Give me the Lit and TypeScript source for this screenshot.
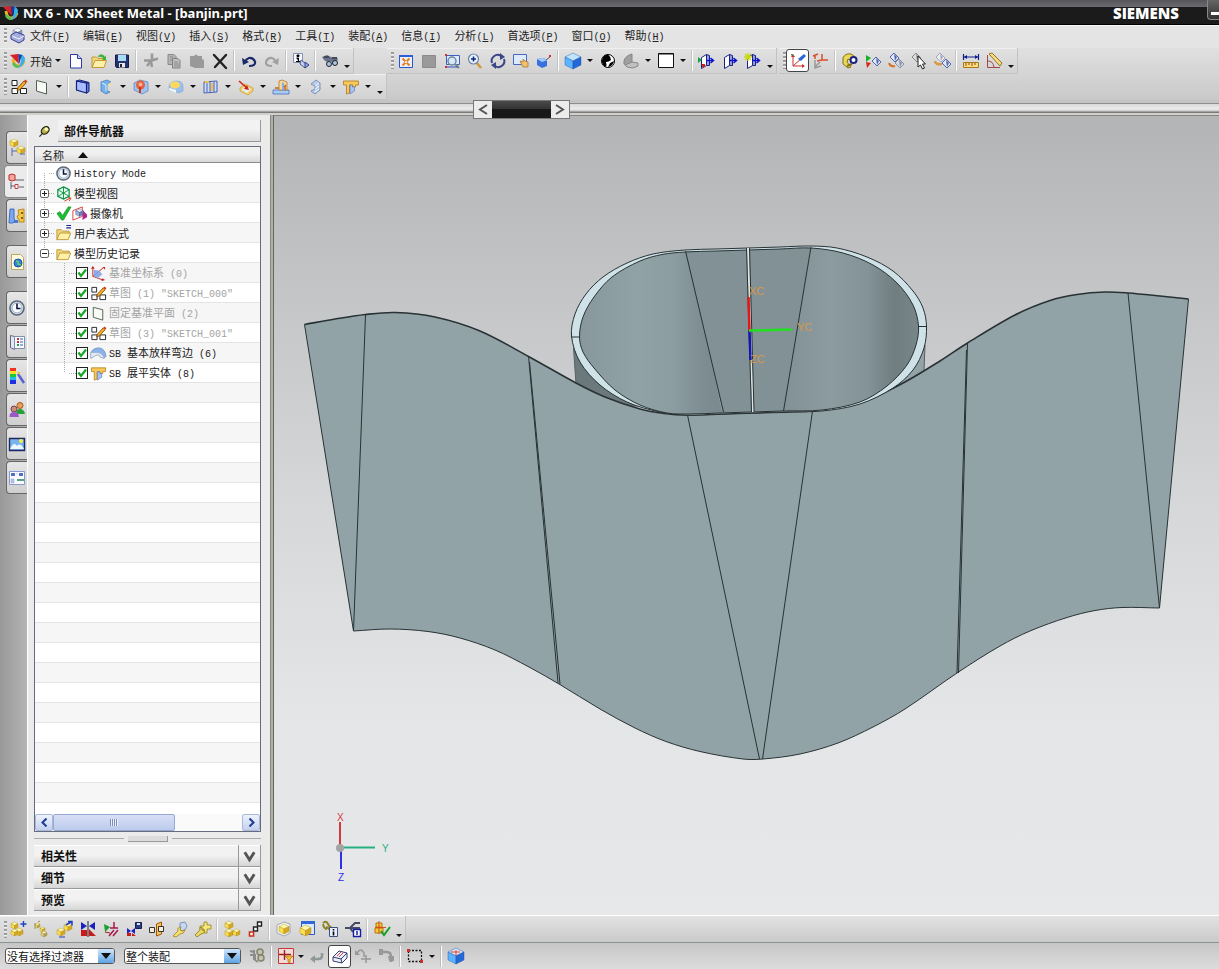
import { LitElement, html, css, svg, nothing } from "lit";
import type { TemplateResult } from "lit";
import { customElement, property } from "lit/decorators.js";
import { classMap } from "lit/directives/class-map.js";

type Pt = [number, number];

/* ---------- text: CJK runs and fixed-pitch Latin runs ---------- */
const mixed = (text: string, accessKey = false) =>
  text.split(/([\x20-\x7e]+)/).filter(Boolean).map((run) => {
    if (!/^[\x20-\x7e]/.test(run)) return run;
    const key = accessKey ? /^\((\w)\)$/.exec(run) : null;
    return key
      ? html`<span class="latin">(<u>${key[1]}</u>)</span>`
      : html`<span class="latin">${run}</span>`;
  });

/* ---------- icon parts ---------- */
const cube = (x: number, y: number, s: number, top = "#fff7a8", left = "#fbe04c", right = "#d8a820", line = "#a88a20") => {
  const h = s / 2, q = s / 4;
  return svg`<path d="M${x} ${y + q}l${h} ${-q}l${h} ${q}l${-h} ${q}z" fill=${top} stroke=${line} stroke-width=".4"/>
  <path d="M${x} ${y + q}l${h} ${q}v${h}l${-h} ${-q}z" fill=${left} stroke=${line} stroke-width=".4"/>
  <path d="M${x + s} ${y + q}l${-h} ${q}v${h}l${h} ${-q}z" fill=${right} stroke=${line} stroke-width=".4"/>`;
};
const blueCube = (x: number, y: number, s: number) => cube(x, y, s, "#bfe4ff", "#5ab4ff", "#2468d8", "#1c4fa0");
const grayCube = (x: number, y: number, s: number) => cube(x, y, s, "#f4f6fb", "#c3cbe0", "#8b95b6", "#66708f");
const sheet = (x: number, y: number, f = "#dfe7fb", s = "#5468a8") =>
  svg`<path d="M${x} ${y + 4}l4-4 5 5-4 4z" fill=${f} stroke=${s}/><path d="M${x + 4} ${y + 1}l3 3-2 4z" fill=${s}/>`;
const boxArrow = svg`<path d="M3.500 5.500l5-3v11l-5 3z" fill="#fff" stroke="#1c2480"/><path d="M8.500 2.500l3 1v10l-3 0z" fill="#8f9fe0" stroke="#1c2480"/><path d="M8 8.500h7M12.500 6l3 2.500-3 2.500" fill="none" stroke="#1010d0" stroke-width="1.500"/>`;
const nxBall = svg`<path d="M4 7q1 8 6 7 4-1 5-5" fill="none" stroke="#f0b020" stroke-width="3"/><path d="M12 2q6 3 3 9-2 4-6 5 4-6 3-14z" fill="#38b0e8"/><path d="M1 3l8-1 1 10z" fill="#d82028"/><path d="M9 2l4 1-3 9z" fill="#203c9c"/><path d="M3 12q2 4 6 4l1-3q-3 1-5-3z" fill="#58c050"/>`;
const sketchGlyph = svg`<path d="M2 2.500h5v5h-5zM2 10.500h5.500v5h-5.500zM10.500 10.500h6v5h-6z" fill="#fff" stroke="#222"/><path d="M8 9.500l6-6.500 2 2-6 6.500-3 1z" fill="#f4b020" stroke="#7c3800" stroke-width=".8"/><path d="M14 3l1.500-1.500 2 2L16 5z" fill="#d84020"/>`;
const plane = svg`<path d="M3.500 2.500l10 2.500v11l-10-3z" fill="#f8faf6" stroke="#506050"/>`;
const flat = svg`<path d="M1.500 3h15v4h-3v2h-3V7h-3v8l-3 1V7h-3z" fill="#f8c858" stroke="#b07818" stroke-width=".8"/><path d="M8 7h2.500v2h2v4L8 16z" fill="#a8c4f4" stroke="#5570b8" stroke-width=".6"/>`;
const clock = svg`<circle cx="9" cy="9" r="7" fill="#dcebf8" stroke="#5c6878" stroke-width="1.600"/><circle cx="9" cy="9" r="5" fill="#f6faff" stroke="#9ab"/><path d="M9 4.500V9.500h3.500" fill="none" stroke="#113" stroke-width="1.600"/>`;
const folder = svg`<path d="M2 15.500V5h4.500l1.500 1.500h7v2.500" fill="#f0d878" stroke="#c09838"/><path d="M2 15.500l3-7h11.500l-2.500 7z" fill="#fff2a8" stroke="#c09838"/>`;
const greenCheck = svg`<path d="M2 9l3-2 3 4 6-9 3 0-8 14H7z" fill="#18c030" stroke="#0c8020" stroke-width=".6"/>`;

const ICONS: Record<string, TemplateResult | unknown> = {
  nx: nxBall,
  part: svg`${grayCube(4, 1, 9)}<path d="M2 8l5-3 8 3v5l-5 3-8-4z" fill="#a4aede" stroke="#34408c"/><path d="M3 9l7 3 5-3" fill="none" stroke="#f2f4ff"/>`,
  newFile: svg`<path d="M3.500 2.500h7l4 4v9.500h-11z" fill="#fdfdff" stroke="#2c38a8"/><path d="M10.500 2.500v4h4" fill="#c8d0f8" stroke="#2c38a8"/>`,
  open: svg`${folder}<path d="M8 4q4-4 7 1l1-2v5h-4l1.500-1.500Q12 4 8 5z" fill="#40b038"/>`,
  save: svg`<path d="M2.500 3h13v12.500h-12l-1-1z" fill="#243470" stroke="#141c48"/><path d="M5 3h8v6H5z" fill="#a8dcf4"/><path d="M6 11h6v4.500H6z" fill="#e8e8e8"/><path d="M7 12h2v3H7z" fill="#222"/>`,
  cut: svg`<path d="M10 1.500v8M2 8.500h8l6-2M9 9l-4 5M9 10l1 5" stroke="#999" stroke-width="2.600" fill="none"/>`,
  copy: svg`<path d="M3 2.500h6l2 2v8H3z" fill="#b4b4b4" stroke="#888"/><path d="M7.500 6.500h5.500l2 2V16H7.500z" fill="#c0c0c0" stroke="#808080"/><path d="M9 10h4M9 12h5M9 14h5M5 5h3M5 8h2" stroke="#888"/>`,
  paste: svg`<path d="M2 4h4q2-3 4 0h4v3l2 1v8H7l-5-2z" fill="#999"/>`,
  del: svg`<path d="M3 3l12 13M15 3L4 15" stroke="#222" stroke-width="2.400" stroke-linecap="round"/>`,
  undo: svg`<path d="M9 14q7 0 6-4.500-2-4-6-3.500-3 1-4 4" fill="none" stroke="#1c2a6c" stroke-width="2.200"/><path d="M2 6l1 7 6-3z" fill="#1c2a6c"/>`,
  redo: svg`<path d="M9 14q-7 0-6-4.500 2-4 6-3.500 3 1 4 4" fill="none" stroke="#a0a0a0" stroke-width="2.200"/><path d="M16 6l-1 7-6-3z" fill="#a0a0a0"/>`,
  info: svg`<path d="M1.500 1.500h9v9h-9z" fill="#f6f8ff" stroke="#8090b0"/><path d="M5 3h2v1.500H5zM4.500 6h2v3.500M4 9.500h4.500" fill="#000" stroke="#000"/><path d="M9 8l5 4-1 4-5-4z" fill="#c4cdf0" stroke="#5060a0"/><path d="M13 10l4 3-4 3z" fill="#94a4dc" stroke="#34408c"/>`,
  find: svg`<path d="M1 5l5-2 4 2 6 0 1 3-4 3-4-2-3 1-3-2z" fill="#68728c"/><circle cx="8" cy="12" r="2.500" fill="#a8c4e8" stroke="#222"/><circle cx="14" cy="11" r="2.500" fill="#a8c4e8" stroke="#222"/><path d="M3 5h5M11 6h5" stroke="#222"/>`,
  fit: svg`<path d="M2.500 3.500h13v12h-13z" fill="#e8f0ff" stroke="#2858c8"/><path d="M2 3h14v2H2z" fill="#2c60d8"/><path d="M5.500 6.500l7 7M12.500 6.500l-7 7" stroke="#e88018" stroke-width="2"/><path d="M8 9h2v2H8z" fill="#e8f0ff"/>`,
  grayBox: svg`<path d="M2.500 3.500h13v12h-13z" fill="#9a9a9a" stroke="#8a8a8a"/>`,
  zoomBox: svg`<path d="M3.500 3.500h13v9h-13z" fill="#e2ecff" stroke="#4060c0"/><circle cx="9" cy="9" r="4" fill="#d4eaf8" stroke="#7088a0" stroke-width="1.500"/><path d="M12 12l4 4" stroke="#788" stroke-width="2"/><path d="M2 15h13" stroke="#3050c0"/><path d="M2 2h2v2H2zM2 14h2v2H2z" fill="#d03030"/>`,
  zoomIn: svg`<path d="M10 10l5 6" stroke="#d09838" stroke-width="2.500"/><circle cx="7.500" cy="7" r="5" fill="#e4f2ff" stroke="#7080a8" stroke-width="1.200"/><path d="M5 7h5M7.500 4.500v5" stroke="#102878" stroke-width="1.500"/>`,
  rotate: svg`<path d="M3 11a6 6 0 0 1 9-7M15 7a6 6 0 0 1-9 7" fill="none" stroke="#3a4688" stroke-width="2"/><path d="M11 1l5 4-5 3zM7 17l-5-4 5-3z" fill="#3a4688"/>`,
  pan: svg`<path d="M1.500 2.500h13v10h-13z" fill="#dceafc" stroke="#4868c0"/><path d="M8 9l3 1 0-3 2 2 3 1v5h-5z" fill="#f0c070" stroke="#a87828" stroke-width=".8"/>`,
  persp: svg`<path d="M2 7l7-1 3 3v5l-5 2-5-3z" fill="#3870e0"/><path d="M2 7l6-1 4 2-5 2z" fill="#a4ccff"/><path d="M11 8l5-4" stroke="#555"/><path d="M14 3h2v2h-2z" fill="#d03030"/>`,
  shaded: blueCube(1, 1, 16),
  ball: svg`<circle cx="9" cy="9" r="6.500" fill="#fff" stroke="#000"/><path d="M9 2.500a6.500 6.500 0 0 0-2 12.500q1-2 0-5 3 0 5-2 0-3-3-5.500z" fill="#000"/><path d="M15 9q-1 5-6 6l2-4z" fill="#000"/>`,
  grayPart: svg`<path d="M2 9q1-5 8-7v8l-5 3-3-1z" fill="#a0a0a0" stroke="#848484"/><path d="M3 13l7-3 6 1v3l-5 2-6-1z" fill="#c0c0c0" stroke="#888"/>`,
  white: svg`<path d="M1.500 1.500h15v14h-15z" fill="#fff" stroke="#111"/><path d="M1 2h16" stroke="#111"/>`,
  sectA: svg`${boxArrow}<path d="M0 5l4 3-4 3z" fill="#18a838"/><path d="M4 12h3v3H4z" fill="#d02020"/>`,
  sectB: boxArrow,
  sectC: svg`${boxArrow}<path d="M4 1v8M0 5h8M1 2l6 6M7 2L1 8" stroke="#c8d818" stroke-width="1.300"/>`,
  wcs: svg`<path d="M4 5v9h9M4 14l9-8" fill="none" stroke="#c83030"/><path d="M2 5l2-3 2 3zM13 12l3 2-3 2z" fill="#c83030"/><path d="M9 7l6-5 2 2-5 5z" fill="#2868d8"/><path d="M2 2h2v1.500H2z" fill="#28a040"/>`,
  wcsB: svg`<path d="M1 4l5-2M3 3v4M10 2v6h6M10 8l-5 1" fill="none" stroke="#d85030" stroke-width="1.500"/><path d="M3 8v8l6-2M3 15l5-5" fill="none" stroke="#999" stroke-width="1.500"/>`,
  mobile: svg`<path d="M2 6q2-5 8-4l3 2-4 4-2-1-1 3 4 5-3 1-5-4z" fill="#ecd858" stroke="#847010"/><circle cx="12.500" cy="8" r="3" fill="#fff" stroke="#182080" stroke-width="2"/><path d="M6 14l5-2" stroke="#847010" stroke-width="2"/>`,
  play: svg`<path d="M2 3l5 3-5 4z" fill="#18b028"/><path d="M2 10l5 1-4 5z" fill="#d82818"/>${sheet(8, 5)}`,
  sheets: svg`${sheet(3, 1)}${sheet(8, 7, "#d4d8e4", "#8890a8")}<path d="M2 11q1 4 6 3" fill="none" stroke="#d87028" stroke-width="2"/>`,
  pick: svg`${sheet(2, 1, "#ddd", "#888")}<path d="M8 4v11l2.500-2 2 4 2-1-2-4h3z" fill="#fff" stroke="#222"/>`,
  sheetsB: svg`${sheet(3, 1, "#eee", "#a0a8c0")}${sheet(9, 7)}<path d="M2 9q0 4 7 3" fill="none" stroke="#d89848" stroke-width="2.500"/>`,
  measure: svg`<path d="M1.500 2v6M16.500 2v6M2 5h14" stroke="#101c90" stroke-width="1.200"/><path d="M2 5l3-2v4zM16 5l-3-2v4z" fill="#101c90"/><path d="M1.500 10.500h15v5h-15z" fill="#f8e080" stroke="#a87818"/><path d="M4 11v3M7 11v2M10 11v3M13 11v2" stroke="#a04010"/>`,
  angle: svg`<path d="M2.500 3v12.500H15" fill="none" stroke="#a04848"/><path d="M3 9q5 0 6 6" fill="none" stroke="#a04848"/><path d="M4 2l3-1 10 10-2 3z" fill="#f6dc80" stroke="#987020"/>`,
  sketch: sketchGlyph,
  plane,
  tab: svg`<path d="M2.500 3l10 2v10l-10-3z" fill="#a8bcff" stroke="#14207c" stroke-width="1.200"/><path d="M2.500 3l3-1 9.500 2.500-2.500 .5zM15 4.500v9l-2.500 1.500V5z" fill="#6078d8" stroke="#14207c"/>`,
  flange: svg`<path d="M4 4l6-2 4 2-4 3v6l3 1-4 2-5-3z" fill="#6fb2ee" stroke="#4474b8" stroke-width=".7"/><path d="M10 7l4-3v2l-2 2z" fill="#f8e090"/><path d="M5 5l4 2v6" fill="none" stroke="#dff0ff"/>`,
  bend: svg`<path d="M2 5l6-3 8 2v9l-6 3-8-4z" fill="#9cc4f0" stroke="#5480b8" stroke-width=".7"/><circle cx="8.500" cy="7" r="4.500" fill="#e86040"/><circle cx="8.500" cy="6.500" r="2" fill="#f8b090"/><path d="M8 9v6" stroke="#c83818" stroke-width="2"/>`,
  dimple: svg`<path d="M2 9q0-5 7-6 7 0 7 5v5l-4 2-10-3z" fill="#98c0ec" stroke="#88a4c8" stroke-width=".6"/><ellipse cx="8" cy="7" rx="5" ry="3.500" fill="#fcd860"/><path d="M2 10l7 2v3l-7-3z" fill="#eef6fc"/>`,
  louver: svg`<path d="M2 4l13-1v11l-13 1z" fill="#cfdcfb" stroke="#4860b0"/><path d="M5 4v10M8 4v10M12 4v10" stroke="#4860b0"/><path d="M9 5h2v8H9zM3 3h4v2H3z" fill="#f4c040"/>`,
  cutout: svg`<path d="M3 10l5-4 8 4v3l-5 4-8-4z" fill="#f4d068" stroke="#c89830" stroke-width=".7"/><path d="M8 8l6 3-4 4-5-3z" fill="#dff0ff"/><path d="M2 3l8 7" stroke="#d02018" stroke-width="1.600"/><path d="M12 12l-5-1 3-4z" fill="#d02018"/>`,
  punch: svg`<path d="M1 12h16v4H1z" fill="#a8ccf8" stroke="#4c70b8" stroke-width=".8"/><path d="M7 12V3l3-1 5 2v8z" fill="#f8d898" stroke="#b87828" stroke-width=".8"/><path d="M10 12V4l2 1v7" fill="#88b0e8"/><path d="M3 10h4M13 8v4M12 9l2-2" stroke="#c06828" stroke-width="1.500"/>`,
  corner: svg`<path d="M4 6l5-4 4 3v7l-5 4-4-3 4-2V8z" fill="#b8cdec" stroke="#6880ac" stroke-width=".8"/><path d="M8 8l4-3M8 11l4-3M8 14l4-3" stroke="#f4f8ff"/>`,
  flat,
  addComp: svg`${cube(1, 2, 7)}${cube(5, 8, 8)}${cube(1, 9, 7)}<path d="M13.500 1v6M10.500 4h6" stroke="#2040c0" stroke-width="1.400"/>`,
  newComp: svg`${cube(2, 3, 5, "#fff8c0", "#e8dc80", "#b8a850")}${cube(7, 7, 5)}${cube(8, 11, 6, "#f4f0c8", "#d8d090", "#a8a068")}<path d="M5 2l2-1M2 3v6" fill="none" stroke="#a09048"/>`,
  moveComp: svg`${cube(1, 8, 8)}${cube(8, 3, 8)}<path d="M10 5l5-3M12 1.500h4v4" fill="none" stroke="#2040c0" stroke-width="1.500"/><path d="M3 17h6" stroke="#2040c0"/>`,
  mirror: svg`<path d="M2 2l6 4-6 4zM16 2v8l-6-4z" fill="#1c20c0"/><path d="M2 10h6v6H2zM10 9l7 7h-7z" fill="#c81c1c"/><path d="M9 1v16" stroke="#222"/>`,
  constrain: svg`<path d="M2 4l6 3-5 5z" fill="#18a030"/><path d="M12 2v6M8 8h8M7 16l5-6M11 16l5-6" stroke="#a81848" stroke-width="1.500"/><path d="M3 12l5 1" stroke="#a02020"/>`,
  pattern: svg`<path d="M2 8l4 3-4 3zM10 8v6l-4-3z" fill="#1c20c0"/><path d="M2 13h4v3H2zM7 13l4 3H7z" fill="#c81c1c"/><path d="M10.500 2.500h6v6h-6z" fill="#2c3c80" stroke="#181c50"/><path d="M12 3h3v2h-3z" fill="#cfe4ff"/>`,
  ortho: svg`<path d="M1.500 7.500h5v5h-5z" fill="#f4f0d8" stroke="#333"/><path d="M8.500 4l5-2v12l-5 2z" fill="#f8c060" stroke="#9c5808"/><path d="M10.500 6.500h5v5h-5z" fill="#f4f0d8" stroke="#333"/>`,
  wrench: svg`<path d="M9 3l5-1 2 4-2 4-5 1z" fill="#c4d8f4" stroke="#8098b8"/><path d="M2 16l5-5q-1-4 3-4l-1 3 2 1 3-1q-1 4-5 4l-4 3z" fill="#f8e070" stroke="#988018" stroke-width=".8"/>`,
  wrenchB: svg`<path d="M10 2l3 0 0 3h4v4h-4v4h-3V9H6V6h4z" fill="#f8e878" stroke="#8c8020" stroke-width=".8"/><path d="M1 15l5-5q-1-3 2-3v3l3 1q-1 3-4 3l-4 3z" fill="#ecd860" stroke="#8c7818" stroke-width=".8"/>`,
  cubes3: svg`${cube(2, 1, 8)}${cube(2, 9, 8)}${cube(10, 9, 7)}`,
  chain: svg`<path d="M11.500 2h4v4h-4z" fill="#fff" stroke="#222" stroke-width="1.400"/><path d="M7.500 7h4v4h-4z" fill="#fff" stroke="#222" stroke-width="1.400"/><path d="M3.500 12h4v4h-4z" fill="#fff" stroke="#c83018" stroke-width="1.600"/>`,
  asmA: svg`<path d="M2 5l7-3 6 2v9l-6 3-7-3z" fill="#f6f6ee" stroke="#a0a8b4"/>${cube(4, 4, 10)}`,
  asmB: svg`<path d="M3.500 1.500h13v13h-13z" fill="#dceaff" stroke="#2858c0"/><path d="M3 1h14v3H3z" fill="#3068dc"/>${cube(2, 5, 11)}`,
  asmC: svg`<path d="M2 3q3-3 5 1t3 2M2 4q1 5 4 5M5 7q4 1 5 6" fill="none" stroke="#8c8428" stroke-width="2"/><path d="M8.500 7.500h8v9h-8z" fill="#e8f0ff" stroke="#405080"/><path d="M12.500 9v1.500M12.500 11.500v4" stroke="#000" stroke-width="1.600"/>`,
  asmD: svg`<path d="M1 8h5M6 8l5-5h5M6 8h10M6 8l3 4" fill="none" stroke="#444c64" stroke-width="2"/><path d="M9.500 9.500h7v7h-7z" fill="#fff" stroke="#181ca0" stroke-width="1.400"/><path d="M13 11v4" stroke="#181ca0" stroke-width="1.500"/>`,
  verify: svg`<path d="M3 3h6v4H3zM2 8h8v5H2z" fill="#f8c838" stroke="#b07810"/><path d="M6 1v13M2 7.500h11" stroke="#d85018"/><path d="M8 11l3 4 6-8" fill="none" stroke="#18a028" stroke-width="2"/>`,
  grayAsm: svg`<path d="M2 8h5v5l3 2M6 3v10M2 4l4 1" fill="none" stroke="#8c8c8c" stroke-width="2"/><circle cx="12" cy="5" r="3" fill="#c4c4b4" stroke="#84846c" stroke-width="1.500"/><circle cx="13" cy="11" r="3" fill="#c4c4b4" stroke="#84846c" stroke-width="1.500"/>`,
  snap: svg`<path d="M1.500 1.500h15v15h-15z" fill="#f0dcd8" stroke="#c83838"/><path d="M2 7.500h12M7.500 3v10" stroke="#a02020" stroke-width="1.400"/><path d="M8 9h8l-3 3v4l-2-1v-3z" fill="#f4c028" stroke="#a87010" stroke-width=".7"/>`,
  back: svg`<path d="M14 6v3q0 3-4 3H6" fill="none" stroke="#909898" stroke-width="2.500"/><path d="M2 12l5-4v8z" fill="#909898"/>`,
  eraser: svg`<path d="M2 10l6-6 8 2v5l-5 5-9-2z" fill="#eef0fa" stroke="#343c70"/><path d="M2 10l8 2 6-6M10 12l1 4" fill="none" stroke="#343c70"/><path d="M6 9l4-4M8 10l4-4" stroke="#d84848"/>`,
  hookA: svg`<path d="M3 6q4-6 7 0v4M7 12h10M12 8v8" fill="none" stroke="#989898" stroke-width="1.500"/><path d="M1 3v5h5z" fill="#989898"/>`,
  hookB: svg`<path d="M3 5h7q4 0 4 5v5" fill="none" stroke="#989898" stroke-width="2.600"/><path d="M2 2h4v6H2zM11 9h6v5h-5z" fill="#989898"/>`,
  marquee: svg`<path d="M2.500 3.500h13v11h-13z" fill="none" stroke="#111" stroke-dasharray="2 1.500" stroke-width="1.300"/><path d="M1 2h3v3H1zM14 13h3v3h-3z" fill="#c83030"/>`,
  cubeRed: svg`${blueCube(1, 1, 16)}<path d="M4 5l5-3 5 3-5 3z" fill="#f8e8e8"/><path d="M9 3v6M4 5h9" stroke="#d04040"/>`,
  clock,
  views: svg`<path d="M9 2l6 3v7l-6 3-6-3V5z" fill="#e8fff0" stroke="#109048" stroke-width="1.300"/><path d="M9 2v13M3 5l12 7M15 5L3 12" stroke="#109048"/><path d="M10 17l6-3M14 13l3 1-2 3" fill="none" stroke="#d83020"/>`,
  camera: svg`<path d="M2 6l10-4v10l-10 4z" fill="#fff" stroke="#e04040"/>${cube(5, 4, 8, "#dce8ff", "#a0b4e0", "#6880bc", "#445")}<path d="M13 6l4 4v3l-5 3z" fill="#b02890"/>`,
  check: greenCheck,
  folder,
  folderEq: svg`${folder}<path d="M12 .5h5M12 3h5" stroke="#1c2090" stroke-width="1.200"/>`,
  csys: svg`<path d="M3 2v10l11 4M3 12l11-9" fill="none" stroke="#c82828"/><path d="M4 5l6 1 3 4-5 4-4-2z" fill="#86a4e4" opacity=".9"/><path d="M1 4l2-3 2 3zM13 2h3v3zM13 14l3 2-4 1z" fill="#c82828"/>`,
  loft: svg`<path d="M1 8q2-5 9-5 6 1 7 9l-2 2-4-1q-1-4-5-2l-5 3z" fill="#8cb4ec" stroke="#7088b0" stroke-width=".7"/><path d="M1 8v6l5-3q4-2 5 2l4 1q-2-6-8-6z" fill="#e4ecf8" stroke="#8898b8" stroke-width=".5"/>`,
  asmNav: svg`${cube(2, 0, 8)}${cube(9, 7, 8)}<path d="M4 9v8M4 12h5M12 15h5" fill="none" stroke="#5868a0"/>`,
  partNav: svg`<path d="M2 2l3-1 3 1v5l-3 1-3-1z" fill="#f0a8a0" stroke="#c02828"/><path d="M8 7h9M4 9v7M4 13h4M12 14h5" stroke="#5c6070"/><path d="M8 11.500h3v4H8z" fill="#fff" stroke="#c04040"/>`,
  reuse: svg`<path d="M2 2h4v9l1 3-2 2H1z" fill="#7ca8f0" stroke="#2c58b0" stroke-width=".8"/><path d="M10 3l6-1v13h-5v-3q-2 0-2-3l2-1z" fill="#f4c848" stroke="#b07c10" stroke-width=".8"/><circle cx="14" cy="6" r="1" fill="#604000"/><circle cx="14" cy="11" r="1" fill="#604000"/><path d="M6 13h4v3H5z" fill="#4878d8"/>`,
  web: svg`<path d="M3.500 1.500h9l3 3v12h-12z" fill="#fffbe0" stroke="#b8a860"/><circle cx="10" cy="10" r="4" fill="#3880e0" stroke="#1c50a0"/><path d="M8 8q3 0 2 3l3 1" fill="none" stroke="#60d060" stroke-width="1.600"/>`,
  history: svg`<path d="M2.500 2.500l4 1v13l-4-2z" fill="#e4e8f4" stroke="#606880"/><path d="M6.500 3.500h10v12h-10z" fill="#f8fbff" stroke="#8090b0"/><path d="M9 6h2M9 9h2" stroke="#c83030" stroke-width="2"/><path d="M9 12h2" stroke="#28a040" stroke-width="2"/><path d="M12 6h3M12 9h3M12 12h3" stroke="#3060b8"/>`,
  palette: svg`<path d="M2 1h6v3H2z" fill="#f03020"/><path d="M2 4h6v3H2z" fill="#f8e020"/><path d="M2 7h6v3H2z" fill="#20c830"/><path d="M2 10h6v3H2z" fill="#20b8f0"/><path d="M2 13h6v4H2z" fill="#2030e0"/><path d="M10 7l6 9" stroke="#5860d8" stroke-width="2.500"/><path d="M9 5h3v3" fill="#f4c030"/>`,
  roles: svg`<circle cx="12" cy="4.500" r="3" fill="#e8a058" stroke="#a85818"/><path d="M8 13q0-5 4-5t5 5z" fill="#28a038"/><circle cx="6" cy="8" r="3" fill="#c89070" stroke="#784068"/><path d="M1.500 16q0-5 4.500-5t5 5z" fill="#9858c8"/>`,
  scene: svg`<path d="M1.500 3.500h15v12h-15z" fill="#78b4f0" stroke="#202860" stroke-width="1.400"/><path d="M2 14q4-8 7-3 3-4 7 3z" fill="#f0f8ff"/><circle cx="13" cy="6" r="2" fill="#f8f040"/>`,
  details: svg`<path d="M1.500 2.500h15v13h-15z" fill="#fafcff" stroke="#8898d0"/><path d="M3 4h4v3H3zM11 4h4v3h-4z" fill="#5070c8"/><path d="M3 10h3v4H3zM8 5h2" fill="#b4c4ec" stroke="#90a0c8" stroke-width=".5"/><path d="M9 11h7" stroke="#208058" stroke-width="1.500"/>`,
  pin: svg`<path d="M2 16l5-5" stroke="#222" stroke-width="1.600"/><ellipse cx="10" cy="7.500" rx="6" ry="4.500" transform="rotate(-40 10 7.500)" fill="#b8b040" stroke="#111" stroke-width="1.600"/><circle cx="11.500" cy="6" r="2.500" fill="#fffbc0"/>`,
};

const icon = (name: string) => html`<svg class="icon" viewBox="0 0 18 18" aria-hidden="true">${ICONS[name]}</svg>`;

const sharedText = css`
  .latin { font: 10px/14px "Liberation Mono", monospace; white-space: pre; }
  .icon { width: 18px; height: 18px; display: block; flex: none; }
  button { font: inherit; color: inherit; background: none; border: 0; padding: 0; margin: 0; }
`;

/* ---------- toolbar ---------- */
/* "|" separator, "v" drop arrow, "," overflow arrow, "*name" pressed tool */
@customElement("nx-toolbar")
export class NxToolbar extends LitElement {
  @property({ attribute: false }) items: string[] = [];
  @property() lead = "";

  static styles = [sharedText, css`
    :host { display: flex; align-items: center; box-sizing: border-box; height: 26px; flex: none;
      border: 1px solid #c2c2c2; border-width: 0 1px 1px 0; box-shadow: inset 0 1px #f0f0f0;
      background: linear-gradient(#e2e2e2, #d2d2d2); font: 11px/16px "Noto Sans CJK SC", sans-serif; }
    .grip { width: 3px; height: 17px; margin: 0 0 0 4px; flex: none;
      background: repeating-linear-gradient(#9c9c9c 0 2px, #f2f2f2 2px 3px, transparent 3px 4px); }
    .tool { width: 23px; height: 23px; display: grid; place-items: center; flex: none; }
    .pressed { background: #fff; border: 1px solid #444; border-radius: 3px; }
    .sep { width: 2px; height: 21px; margin: 0 2px; background: #fff; border-left: 1px solid #c4c4c4; box-sizing: border-box; flex: none; }
    .drop { width: 12px; height: 23px; display: grid; place-items: center; flex: none; }
    .drop::before { content: ""; border: 3px solid transparent; border-top-color: #111; border-bottom: 0; }
    .more { width: 12px; height: 23px; display: grid; place-items: end center; flex: none; }
    .more::before { content: ""; border: 3px solid transparent; border-top-color: #111; border-bottom: 0; margin-bottom: 4px; }
    .start { display: flex; align-items: center; height: 23px; flex: none; }
    .start .icon { margin: 0 3px 0 2px; }
  `];

  render() {
    return html`<span class="grip"></span>
      ${this.lead ? html`<button class="start">${icon("nx")}${this.lead}<span class="drop"></span></button>` : nothing}
      ${this.items.map((it) => {
        if (it === "|") return html`<span class="sep"></span>`;
        if (it === "v") return html`<button class="drop" aria-label="more options"></button>`;
        if (it === ",") return html`<button class="more" aria-label="toolbar options"></button>`;
        const pressed = it.startsWith("*");
        const name = pressed ? it.slice(1) : it;
        return html`<button class=${classMap({ tool: true, pressed })} aria-label=${name}>${icon(name)}</button>`;
      })}`;
  }
}

/* ---------- navigator tree ---------- */
interface Node { text: string; icons: string[]; kind: "leaf" | "plus" | "minus" | "child"; dim?: boolean; }

const NODES: Node[] = [
  { text: "History Mode", icons: ["clock"], kind: "leaf" },
  { text: "模型视图", icons: ["views"], kind: "plus" },
  { text: "摄像机", icons: ["check", "camera"], kind: "plus" },
  { text: "用户表达式", icons: ["folderEq"], kind: "plus" },
  { text: "模型历史记录", icons: ["folder"], kind: "minus" },
  { text: "基准坐标系 (0)", icons: ["csys"], kind: "child", dim: true },
  { text: "草图 (1) \"SKETCH_000\"", icons: ["sketch"], kind: "child", dim: true },
  { text: "固定基准平面 (2)", icons: ["plane"], kind: "child", dim: true },
  { text: "草图 (3) \"SKETCH_001\"", icons: ["sketch"], kind: "child", dim: true },
  { text: "SB 基本放样弯边 (6)", icons: ["loft"], kind: "child" },
  { text: "SB 展平实体 (8)", icons: ["flat"], kind: "child" },
];

@customElement("nx-navigator")
export class NxNavigator extends LitElement {
  static styles = [sharedText, css`
    :host { display: flex; flex-direction: column; box-sizing: border-box; padding: 5px 9px 4px 6px;
      background: #ebebeb; border-left: 1px solid #fff; font: 11px/16px "Noto Sans CJK SC", sans-serif; color: #222; min-height: 0; }
    .title { display: flex; align-items: center; height: 22px; margin-bottom: 4px; flex: none; }
    .title .pin { width: 24px; padding-left: 4px; box-sizing: border-box; }
    .title .pin .icon { width: 13px; height: 13px; }
    h2 { margin: 0; flex: 1; font: bold 12px/21px "Noto Sans CJK SC", sans-serif; color: #111; padding-left: 6px;
      background: linear-gradient(#f2f2f2 45%, #dcdcdc); border: 1px solid #999; border-width: 0 1px 1px 0; }
    .box { flex: 1; min-height: 0; display: flex; flex-direction: column; border: 1px solid #666c7c; background: #fff; }
    .head { height: 15px; flex: none; display: flex; align-items: center; gap: 14px; padding-left: 7px;
      background: linear-gradient(#f0f0f0 45%, #d8d8d8); border-bottom: 1px solid #8c8c8c; }
    .head::after { content: ""; border: 5px solid transparent; border-bottom: 6px solid #111; border-top: 0; }
    ul { list-style: none; margin: 0; padding: 0; flex: 1; min-height: 0; overflow: hidden;
      background: repeating-linear-gradient(#fff 0 19px, #e4e4e4 19px 20px, #f6f6f6 20px 39px, #e4e4e4 39px 40px); }
    li { height: 20px; display: flex; align-items: center; padding-left: 4px; white-space: nowrap; }
    li.dim { color: #a4a4a4; }
    li .icon { width: 17px; height: 17px; margin-right: 2px; }
    li .icon + .icon { margin-left: -3px; }
    .gutter { width: 10px; height: 20px; flex: none; display: grid; place-items: center; }
    .line { background: repeating-linear-gradient(#aaa 0 1px, transparent 1px 2px) center / 1px 100% no-repeat; }
    .top { background-size: 1px 10px; background-position: bottom; }
    .end { background-size: 1px 10px; background-position: top; }
    .dots { width: 5px; border-top: 1px dotted #b0b0b0; flex: none; margin-right: 1px; }
    .child { padding-left: 24px; }
    .child .dots { width: 7px; margin: 0; }
    .twist { width: 9px; height: 9px; border: 1px solid #666; border-radius: 2px; background:
      linear-gradient(#222, #222) center / 5px 1px no-repeat, #fff; box-sizing: border-box; }
    .plus { background: linear-gradient(#222, #222) center / 5px 1px no-repeat, linear-gradient(#222, #222) center / 1px 5px no-repeat, #fff; }
    label { display: flex; align-items: center; }
    input { appearance: none; width: 12px; height: 12px; margin: 0 2px 0 0; border: 1px solid #222; box-sizing: border-box; background: #fff; flex: none; }
    input:checked { background: #fff url("data:image/svg+xml,%3Csvg xmlns='http://www.w3.org/2000/svg' viewBox='0 0 10 10'%3E%3Cpath d='M1.500 4.500l2.500 3.500 5-6.500' fill='none' stroke='%2314a824' stroke-width='2.200'/%3E%3C/svg%3E") center / 10px 10px no-repeat; }
    .scroll { height: 17px; flex: none; display: flex; background: #fafafa; }
    .scroll button { box-sizing: border-box; width: 18px; border: 1px solid #aab8dc; border-radius: 2px;
      background: linear-gradient(#eef2fc, #c4d0ee); display: grid; place-items: center; }
    .scroll svg { width: 7px; height: 9px; fill: none; stroke: #1c3c94; stroke-width: 2; }
    .thumb { flex: 0 0 54%; box-sizing: border-box; border: 1px solid #98a8d4; border-radius: 2px; display: grid; place-items: center;
      background: linear-gradient(#d8e0f6, #bccaec); margin-right: auto; }
    .thumb::before { content: ""; width: 8px; height: 7px; background: repeating-linear-gradient(90deg, #7c8cbc 0 1px, #eef2ff 1px 2px); }
    .split { height: 13px; flex: none; display: grid; grid-template-columns: 1fr 40px 1fr; gap: 4px; align-items: center; }
    .split i { border-top: 1px solid #aaa; }
    .split i:nth-child(2) { height: 5px; background: #dcdcdc; border: 1px solid #999; border-width: 0 1px 1px 0; }
    .fold { display: flex; flex: none; height: 22px; box-sizing: border-box; border: 1px solid #999; border-width: 0 1px 1px 0;
      box-shadow: inset 0 1px #fff; background: linear-gradient(#f2f2f2 48%, #d6d6d6); text-align: left;
      font: bold 12px/20px "Noto Sans CJK SC", sans-serif; color: #111; padding-left: 7px; align-items: center; }
    .fold svg { margin-left: auto; width: 22px; height: 21px; border-left: 1px solid #999; fill: none; stroke: #555; stroke-width: 3; box-sizing: border-box; }
  `];

  private row(n: Node, i: number) {
    const body = html`${n.icons.map(icon)}<span>${mixed(n.text)}</span>`;
    if (n.kind === "child") {
      return html`<li class=${classMap({ child: true, dim: !!n.dim })}>
        <span class=${classMap({ gutter: true, line: true, end: i === NODES.length - 1 })}></span><i class="dots"></i>
        <label><input type="checkbox" checked>${body}</label></li>`;
    }
    return html`<li>
      <span class=${classMap({ gutter: true, line: true, top: n.kind === "leaf", end: n.kind === "minus" })}>
        ${n.kind === "leaf" ? nothing : html`<button class="twist ${n.kind}" aria-label="toggle"></button>`}
      </span><i class="dots"></i>${body}</li>`;
  }

  render() {
    return html`
      <div class="title"><button class="pin" aria-label="pin">${icon("pin")}</button><h2>部件导航器</h2></div>
      <div class="box">
        <div class="head">名称</div>
        <ul>${NODES.map((n, i) => this.row(n, i))}</ul>
        <div class="scroll">
          <button aria-label="scroll left"><svg viewBox="0 0 7 9"><path d="M5.500 .5l-4 4 4 4"/></svg></button>
          <span class="thumb"></span>
          <button aria-label="scroll right"><svg viewBox="0 0 7 9"><path d="M1.500 .5l4 4-4 4"/></svg></button>
        </div>
      </div>
      <div class="split"><i></i><i></i><i></i></div>
      ${["相关性", "细节", "预览"].map((t) => html`<button class="fold">${t}<svg viewBox="0 0 22 21"><path d="M6 7l5 8 5-8"/></svg></button>`)}
    `;
  }
}

/* ---------- model view ---------- */
/* Cubic curve through the points; tangents are weighted by chord length so uneven spacing stays smooth. */
const smooth = (p: Pt[], close = false, start = "M") => {
  const n = p.length;
  const at = (i: number) => (close ? p[(i + n) % n] : p[Math.max(0, Math.min(n - 1, i))]);
  const dist = (a: Pt, b: Pt) => Math.hypot(a[0] - b[0], a[1] - b[1]) || 0.001;
  const tangent = (i: number): Pt => {
    const a = at(i - 1), b = at(i), c = at(i + 1);
    const d = dist(a, b) + dist(b, c);
    return [(c[0] - a[0]) / d, (c[1] - a[1]) / d];
  };
  let d = `${start}${p[0][0]} ${p[0][1]}`;
  for (let i = 0; i < (close ? n : n - 1); i++) {
    const b = at(i), c = at(i + 1), k = dist(b, c) / 3;
    const s = tangent(i), t = tangent(i + 1);
    d += `C${b[0] + s[0] * k} ${b[1] + s[1] * k} ${c[0] - t[0] * k} ${c[1] - t[1] * k} ${c[0]} ${c[1]}`;
  }
  return d + (close ? "Z" : "");
};

const TOP: Pt[] = [[304.5, 324.5], [335, 319], [365.5, 314.5], [395, 312.5], [435, 317], [480, 331], [528.5, 356.5], [576, 383], [605, 397], [640, 409], [664, 413.5], [687, 415], [752, 413], [812, 411], [842, 407], [870, 399], [905, 382], [940, 361], [967.5, 343], [1015, 315], [1050, 300.5], [1077, 294.5], [1105, 292], [1128, 293], [1160, 296], [1188.5, 299]];
const BOTTOM: Pt[] = [[1159.5, 608], [1122, 607.5], [1095, 610.5], [1067, 617.5], [1030, 631], [1000, 646], [957, 673], [905, 709], [873, 727], [838, 743], [800, 754], [763, 759], [743, 759], [700, 751.5], [666, 741.5], [635, 728], [600, 709], [559, 684], [529, 667], [495, 650], [460, 638], [428, 631.5], [390, 629], [353.5, 631]];
const OUTER: Pt[] = [[571.5, 336], [575, 314], [586, 294], [603, 277], [627, 263], [653, 254], [685, 250], [716, 249], [748, 248], [780, 247], [811, 246], [837, 248], [867, 257], [893, 271], [913, 291], [923, 308], [926.5, 326], [924, 348], [913, 370], [893, 388], [860, 404], [822, 411], [783, 412], [720, 414], [687, 415], [660, 412], [627, 402], [600, 385], [580, 362]];
const INNER: Pt[] = [[579.5, 337], [583, 317], [594, 297], [612, 277], [640, 261], [662, 254.5], [685, 252], [716, 251], [748, 250], [780, 249], [811, 248], [843, 253], [873, 265], [897, 283], [913, 305], [918.5, 326], [916, 345], [907, 365], [887, 386], [860, 402], [822, 410], [783, 411], [720, 413], [690, 414], [667, 413], [640, 405], [615, 390], [594, 368], [583, 352]];

@customElement("nx-viewport")
export class NxViewport extends LitElement {
  static styles = css`
    :host { display: block; min-width: 0; overflow: hidden; border-top: 1px solid #85857a; box-sizing: border-box;
      background: linear-gradient(#b3b4b5, #c6c7c9 25%, #d7d8da 50%, #e4e5e7 75%, #e7e8ea); }
    svg { display: block; width: 100%; height: 100%; }
    .edge { fill: none; stroke: #283234; stroke-width: 1; }
    .rim { stroke-width: 1.6; }
    .face { fill: #92a3a7; }
    .wcs { font: 11px "Liberation Sans", sans-serif; fill: #d89848; }
    .triad { font: 10px "Liberation Sans", sans-serif; }
  `;
  render() {
    return html`<svg viewBox="274 116 945 799" preserveAspectRatio="xMinYMin meet" role="img" aria-label="banjin.prt">
      <defs>
        <linearGradient id="l" x1="579" x2="724" y1="0" y2="0" gradientUnits="userSpaceOnUse">
          <stop offset="0" stop-color="#87979b"/><stop offset=".4" stop-color="#91a2a6"/><stop offset=".65" stop-color="#8c9da1"/><stop offset=".85" stop-color="#7d8d91"/><stop offset="1" stop-color="#7a898d"/></linearGradient>
        <linearGradient id="r" x1="784" x2="919" y1="0" y2="0" gradientUnits="userSpaceOnUse">
          <stop offset="0" stop-color="#819195"/><stop offset=".35" stop-color="#8b9b9f"/><stop offset=".62" stop-color="#839397"/><stop offset=".82" stop-color="#707d81"/><stop offset="1" stop-color="#78868a"/></linearGradient>
        <clipPath id="in"><path d=${smooth(INNER, true)}/></clipPath>
      </defs>
      <path d="M573.500 348l2.500 36 40 22 30 0z" fill="#6b797d" stroke="#566266"/>
      <path d="M925 345l-1 26-60 35-20-5z" fill="#94a3a8" stroke="#566266"/>
      <path class="face" d="${smooth(TOP)}${smooth(BOTTOM, false, "L")}Z"/>
      <path class="edge" d="${smooth(BOTTOM)}L304.500 324.500M1188.500 299L1159.500 608"/>
      <path class="edge rim" d=${smooth(TOP)}/>
      <path d=${smooth(OUTER, true)} fill="#cfe2e8" stroke="#283234"/>
      <g clip-path="url(#in)">
        <path d="M570 240h115l38 175h-153z" fill="url(#l)"/>
        <path d="M683 240h129l-28 175h-61z" fill="#819195"/>
        <path d="M812 240h120v175h-149z" fill="url(#r)"/>
      </g>
      <path class="edge" d=${smooth(INNER, true)}/>
      <path class="edge" d="M685.500 251l38 161M811 247l-27.500 164M571 337h8.500M918.500 326.500h8"/>
      <path d="M748 248l5 164" stroke="#dfe4e5" stroke-width="2"/>
      <path class="edge" d="M746.500 248l5 164M749.500 248l4.500 164"/>
      <path class="edge" d="M365.500 315l-12 316M528.500 356l29.500 327M529.500 362l30.500 322M687.500 415l72 344M812.500 411l-50 348M967.500 343l-9 330M966.500 350l-9.500 323M1128 293l31.500 315"/>
      <path d="M748.500 297l1 34" stroke="#e01818" stroke-width="2.500"/>
      <path d="M749.500 331l1 29" stroke="#1414b8" stroke-width="2.500"/>
      <path d="M749 330.500l43-1" stroke="#20e020" stroke-width="2.500"/>
      <text class="wcs" x="749" y="295">XC</text>
      <text class="wcs" x="797" y="331">YC</text>
      <text class="wcs" x="750" y="363">ZC</text>
      <path d="M340 822v24" stroke="#d83838" stroke-width="2"/>
      <path d="M343 847.500h32" stroke="#28b080" stroke-width="2"/>
      <path d="M341 850v19" stroke="#3030e8" stroke-width="2"/>
      <circle cx="340" cy="848" r="4" fill="#a4a4a4"/>
      <text class="triad" x="337" y="821" fill="#d83838">X</text>
      <text class="triad" x="382" y="852" fill="#28b080">Y</text>
      <text class="triad" x="338" y="881" fill="#3030e8">Z</text>
    </svg>`;
  }
}

/* ---------- application frame ---------- */
const MENUS = ["文件(F)", "编辑(E)", "视图(V)", "插入(S)", "格式(R)", "工具(T)", "装配(A)", "信息(I)", "分析(L)", "首选项(P)", "窗口(O)", "帮助(H)"];
const STANDARD = ["newFile", "open", "save", "|", "cut", "copy", "paste", "del", "|", "undo", "redo", "|", "info", "|", "find", ","];
const VIEW = ["fit", "grayBox", "zoomBox", "zoomIn", "rotate", "pan", "persp", "|", "shaded", "v", "ball", "grayPart", "v", "white", "v", "|", "sectA", "sectB", "sectC", ","];
const UTILITY = ["*wcs", "wcsB", "|", "mobile", "play", "sheets", "pick", "sheetsB", "|", "measure", "angle", ","];
const FEATURES = ["sketch", "plane", "v", "|", "tab", "flange", "v", "bend", "v", "dimple", "v", "louver", "v", "cutout", "v", "punch", "v", "corner", "v", "flat", "v", ","];
const ASSEMBLY = ["addComp", "newComp", "moveComp", "mirror", "constrain", "pattern", "ortho", "wrench", "wrenchB", "|", "cubes3", "chain", "|", "asmA", "asmB", "asmC", "asmD", "|", "verify", ","];
const TABS = ["asmNav", "partNav", "reuse", "", "web", "", "clock", "history", "palette", "roles", "scene", "details"];

@customElement("app-root")
export class AppRoot extends LitElement {
  static styles = [sharedText, css`
    :host { display: flex; flex-direction: column; height: 100vh; overflow: hidden; color: #222;
      background: #d4d4d4; font: 11px/16px "Noto Sans CJK SC", sans-serif; }
    .titlebar { height: 25px; box-sizing: border-box; flex: none; display: flex; align-items: center; padding-left: 2px; color: #fff;
      background: linear-gradient(#55555a, #6a6a70 7px, #1b1b1b 7px, #1b1b1b 24px, #000 24px); }
    .titlebar h1 { margin: 0 auto 0 3px; font: bold 13px/24px "Noto Sans", sans-serif; }
    .brand { font: 800 15px/24px "Open Sans", sans-serif; margin-right: 28px; }
    .min { width: 12px; height: 20px; align-self: flex-start; background: linear-gradient(#666, #333); border: 1px solid #888; border-width: 0 0 1px 1px;
      border-radius: 0 0 0 4px; box-sizing: border-box; display: grid; align-items: end; justify-items: end; padding-bottom: 4px; }
    .min::before { content: ""; width: 8px; height: 3px; background: #fff; }
    .menubar { height: 23px; flex: none; display: flex; align-items: center; gap: 13px; background: #e4e4e4; border-top: 1px solid #f6f6f6; padding-bottom: 2px; box-sizing: border-box; }
    .menubar .lead { display: flex; align-items: center; gap: 2px; padding-left: 4px; margin-right: -10px; }
    .grip { width: 3px; height: 16px; background: repeating-linear-gradient(#9c9c9c 0 2px, #f2f2f2 2px 3px, transparent 3px 4px); }
    .bars { flex: none; background: linear-gradient(#e0e0e0, #c9c9c9); }
    .row { display: flex; }
    .row .gap { width: 33px; }
    .row .gap.small { width: 2px; }
    .rail { position: relative; height: 15px; flex: none; box-sizing: border-box;
      background: linear-gradient(#c4c4c4 3px, #8e8e8e 3px 4px, #d8d8d8 4px, #ececec 9px, #c8c8c8 11px, #7c7c74 12px 13px, #d0d0d0 13px); }
    .handle { position: absolute; left: 39%; margin-left: -2px; top: 0; width: 97px; height: 19px; z-index: 1; display: flex;
      background: linear-gradient(#4a4a4a, #333 8px, #181818 8px); border: 1px solid #777; box-sizing: border-box; justify-content: space-between; }
    .handle button { width: 18px; background: #ececec; display: grid; place-items: center; }
    .handle svg { width: 10px; height: 11px; fill: none; stroke: #555; stroke-width: 2; }
    main { flex: 1; min-height: 0; display: grid; grid-template-columns: 27px 243px 4px minmax(0, 1fr); }
    .tabs { display: flex; flex-direction: column; align-items: flex-end; gap: 1px; padding-top: 16px; background: linear-gradient(90deg, #999, #b4b4b4); }
    .tabs button { width: 21px; height: 33px; box-sizing: border-box; border: 1px solid #666; border-right: 0; border-radius: 4px 0 0 4px;
      background: linear-gradient(#e6e6e6, #cfcfcf); display: grid; place-items: center; flex: none; }
    .tabs .selected { width: 23px; background: #ebebeb; border-color: #888; }
    .tabs i { height: 11px; }
    .divider { background: linear-gradient(90deg, #888880 1px, #b0b0a8 1px 3px, #66665f 3px); }
    .bottom { flex: none; height: 28px; display: flex; background: linear-gradient(#e2e2e2, #cacaca); border-top: 1px solid #fff; border-bottom: 1px solid #8c9494; box-sizing: border-box; }
    .bottom nx-toolbar { border-bottom: 0; }
    .status { flex: none; height: 26px; display: flex; align-items: center; background: linear-gradient(#c6c6c6, #dcdcdc); padding-left: 5px; }
    .pick { position: relative; width: 110px; height: 16px; margin-right: 9px; }
    .pick.wide { width: 117px; margin-right: 4px; }
    .pick select { appearance: none; width: 100%; height: 16px; box-sizing: border-box; border: 1px solid #555; border-radius: 3px; background: #fff;
      padding: 0 18px 0 1px; font: 11px/14px "Noto Sans CJK SC", sans-serif; color: #111; display: block; margin: 0; }
    .pick::after { content: ""; position: absolute; right: 1px; top: 1px; width: 16px; height: 14px; pointer-events: none; border-radius: 0 2px 2px 0;
      background: linear-gradient(#cfe6fb, #5ea4e4); }
    .pick::before { content: ""; position: absolute; right: 4px; top: 5px; z-index: 1; border: 5px solid transparent; border-top: 6px solid #111; border-bottom: 0; pointer-events: none; }
    .tool { width: 23px; height: 23px; display: grid; place-items: center; flex: none; }
    .pressed { background: #fff; border: 1px solid #444; border-radius: 3px; }
    .drop { width: 8px; height: 23px; display: grid; place-items: center; }
    .drop.roomy { width: 12px; }
    .drop::before { content: ""; border: 3px solid transparent; border-top-color: #111; border-bottom: 0; }
    .sep { width: 2px; height: 21px; border-left: 1px solid #bbb; background: #fff; margin: 0 2px; box-sizing: border-box; flex: none; }
  `];

  private tool(name: string, pressed = false) {
    return html`<button class=${classMap({ tool: true, pressed })} aria-label=${name}>${icon(name)}</button>`;
  }

  render() {
    return html`
      <header class="titlebar">${icon("nx")}<h1>NX 6 - NX Sheet Metal - [banjin.prt]</h1><span class="brand">SIEMENS</span><button class="min" aria-label="minimize"></button></header>
      <nav class="menubar"><span class="lead"><span class="grip"></span>${icon("part")}</span>${MENUS.map((m) => html`<button>${mixed(m, true)}</button>`)}</nav>
      <div class="bars">
        <div class="row">
          <nx-toolbar lead="开始" .items=${STANDARD}></nx-toolbar><span class="gap"></span>
          <nx-toolbar .items=${VIEW}></nx-toolbar><span class="gap small"></span><nx-toolbar .items=${UTILITY}></nx-toolbar>
        </div>
        <div class="row"><nx-toolbar .items=${FEATURES}></nx-toolbar></div>
      </div>
      <div class="rail"><div class="handle">
        <button aria-label="left"><svg viewBox="0 0 10 11"><path d="M9 1L2 5.500 9 10"/></svg></button>
        <button aria-label="right"><svg viewBox="0 0 10 11"><path d="M1 1l7 4.500L1 10"/></svg></button>
      </div></div>
      <main>
        <nav class="tabs">${TABS.map((t) => t
          ? html`<button class=${classMap({ selected: t === "partNav" })} aria-label=${t}>${icon(t)}</button>`
          : html`<i></i>`)}</nav>
        <nx-navigator></nx-navigator>
        <span class="divider"></span>
        <nx-viewport></nx-viewport>
      </main>
      <div class="bottom"><nx-toolbar .items=${ASSEMBLY}></nx-toolbar></div>
      <footer class="status">
        <span class="pick"><select aria-label="选择过滤器"><option>没有选择过滤器</option></select></span>
        <span class="pick wide"><select aria-label="选择范围"><option>整个装配</option></select></span>
        ${this.tool("grayAsm")}<span class="sep"></span>
        ${this.tool("snap")}<button class="drop" aria-label="snap options"></button>
        ${this.tool("back")}${this.tool("eraser", true)}${this.tool("hookA")}${this.tool("hookB")}<span class="sep"></span>
        ${this.tool("marquee")}<button class="drop roomy" aria-label="selection options"></button><span class="sep"></span>
        ${this.tool("cubeRed")}
      </footer>`;
  }
}
